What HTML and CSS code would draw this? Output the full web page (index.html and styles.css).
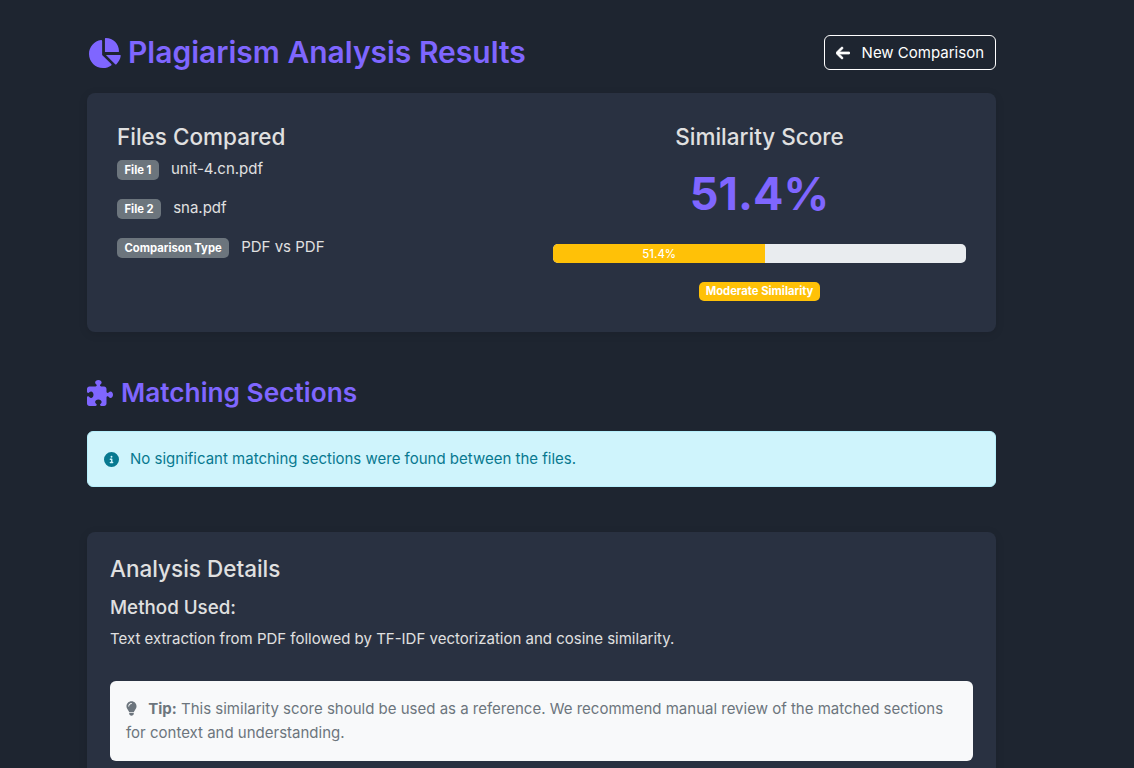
FILE: index.html
```html
<!DOCTYPE html>
<html lang="en">
<head>
    <meta charset="UTF-8">
    <meta name="viewport" content="width=device-width, initial-scale=1.0">
    <title>Plagiarism Analysis Results</title>
    <link rel="stylesheet" href="styles.css">
</head>
<body>
    <div class="container">
        <header class="page-header">
            <h1 class="page-title">
                <svg class="title-icon" viewBox="0 0 576 512"><path d="M304 240V16.6c0-9 7-16.6 16-16.6C443.7 0 544 100.3 544 224c0 9-7.6 16-16.6 16H304zM32 272C32 150.7 122.1 50.3 239 34.3c9.2-1.3 17 6.1 17 15.4V288L412.5 444.5c6.7 6.7 6.2 17.7-1.5 23.1C371.8 495.6 323.8 512 272 512C139.5 512 32 404.6 32 272zm526.4 16c9.3 0 16.6 7.8 15.4 17c-7.7 55.9-34.6 105.6-73.9 142.3c-6 5.6-15.4 5.2-21.2-.7L320 288H558.4z"/></svg>
                Plagiarism Analysis Results
            </h1>
            <a class="back-btn" href="#">
                <svg class="back-icon" viewBox="0 0 448 512"><path d="M9.4 233.4c-12.5 12.5-12.5 32.8 0 45.3l160 160c12.5 12.5 32.8 12.5 45.3 0s12.5-32.8 0-45.3L109.2 288 416 288c17.7 0 32-14.3 32-32s-14.3-32-32-32l-306.7 0L214.6 118.6c12.5-12.5 12.5-32.8 0-45.3s-32.8-12.5-45.3 0l-160 160z"/></svg>
                New Comparison
            </a>
        </header>

        <section class="card summary">
            <div class="files">
                <h3 class="card-heading">Files Compared</h3>
                <div class="file-row"><span class="badge">File 1</span><span>unit-4.cn.pdf</span></div>
                <div class="file-row"><span class="badge">File 2</span><span>sna.pdf</span></div>
                <div class="file-row"><span class="badge">Comparison Type</span><span>PDF vs PDF</span></div>
            </div>
            <div class="score">
                <h3 class="card-heading">Similarity Score</h3>
                <div class="score-value">51.4%</div>
                <div class="progress"><div class="progress-bar" style="width: 51.4%">51.4%</div></div>
                <span class="badge badge-warning">Moderate Similarity</span>
            </div>
        </section>

        <h2 class="section-title">
            <svg class="section-icon" viewBox="0 0 512 512"><path d="M192 104.8c0-9.2-5.8-17.3-13.2-22.8C167.2 73.3 160 61.3 160 48c0-26.5 28.7-48 64-48s64 21.5 64 48c0 13.3-7.2 25.3-18.8 34c-7.4 5.5-13.2 13.6-13.2 22.8v0c0 12.8 10.4 23.2 23.2 23.2H336c26.5 0 48 21.5 48 48v56.8c0 12.8 10.4 23.2 23.2 23.2v0c9.2 0 17.3-5.8 22.8-13.2c8.7-11.6 20.7-18.8 34-18.8c26.5 0 48 28.7 48 64s-21.5 64-48 64c-13.3 0-25.3-7.2-34-18.8c-5.5-7.4-13.6-13.2-22.8-13.2v0c-12.8 0-23.2 10.4-23.2 23.2V464c0 26.5-21.5 48-48 48H279.2c-12.8 0-23.2-10.4-23.2-23.2v0c0-9.2 5.8-17.3 13.2-22.8c11.6-8.7 18.8-20.7 18.8-34c0-26.5-28.7-48-64-48s-64 21.5-64 48c0 13.3 7.2 25.3 18.8 34c7.4 5.5 13.2 13.6 13.2 22.8v0c0 12.8-10.4 23.2-23.2 23.2H48c-26.5 0-48-21.5-48-48V343.2C0 330.4 10.4 320 23.2 320v0c9.2 0 17.3 5.8 22.8 13.2C54.7 344.8 66.7 352 80 352c26.5 0 48-28.7 48-64s-21.5-64-48-64c-13.3 0-25.3 7.2-34 18.8C40.5 250.2 32.4 256 23.2 256v0C10.4 256 0 245.6 0 232.8V176c0-26.5 21.5-48 48-48H168.8c12.8 0 23.2-10.4 23.2-23.2v0z"/></svg>
            Matching Sections
        </h2>

        <div class="alert">
            <svg class="alert-icon" viewBox="0 0 512 512"><path d="M256 512A256 256 0 1 0 256 0a256 256 0 1 0 0 512zM216 336h24V272H216c-13.3 0-24-10.7-24-24s10.7-24 24-24h48c13.3 0 24 10.7 24 24v88h8c13.3 0 24 10.7 24 24s-10.7 24-24 24H216c-13.3 0-24-10.7-24-24s10.7-24 24-24zm40-208a32 32 0 1 1 0 64 32 32 0 1 1 0-64z"/></svg>
            No significant matching sections were found between the files.
        </div>

        <section class="card details">
            <h3 class="card-heading">Analysis Details</h3>
            <h4 class="method-title">Method Used:</h4>
            <p class="method-text">Text extraction from PDF followed by TF-IDF vectorization and cosine similarity.</p>
            <div class="tip">
                <svg class="tip-icon" viewBox="0 0 384 512"><path d="M272 384c9.6-31.9 29.5-59.1 49.2-86.2l0 0c5.2-7.1 10.4-14.2 15.4-21.4c19.8-28.5 31.4-63 31.4-100.3C368 78.8 289.2 0 192 0S16 78.8 16 176c0 37.3 11.6 71.9 31.4 100.3c5 7.2 10.2 14.3 15.4 21.4l0 0c19.8 27.1 39.7 54.4 49.2 86.2H272zM192 512c44.2 0 80-35.8 80-80V416H112v16c0 44.2 35.8 80 80 80zM112 176c0 8.8-7.2 16-16 16s-16-7.2-16-16c0-61.9 50.1-112 112-112c8.8 0 16 7.2 16 16s-7.2 16-16 16c-44.2 0-80 35.8-80 80z"/></svg>
                <strong>Tip:</strong> This similarity score should be used as a reference. We recommend manual review of the matched sections for context and understanding.
            </div>
        </section>
    </div>
</body>
</html>
```

FILE: styles.css
```css
html, body {
    height: 100%;
    overflow: hidden;
}
body {
    margin: 0;
    background-color: #1e2530;
    color: #e0e0e0;
    font-family: Inter, "Liberation Sans", sans-serif;
    font-size: 15px;
    line-height: 24px;
}
.container {
    width: 909px;
    margin-left: 87px;
}
.page-header {
    display: flex;
    justify-content: space-between;
    align-items: center;
    padding-top: 35px;
    margin-bottom: 23px;
}
.page-title {
    display: flex;
    align-items: center;
    gap: 7px;
    margin: 0;
    font-size: 30px;
    font-weight: 600;
    line-height: 35px;
    color: #7f66ff;
}
.title-icon {
    width: 34px;
    height: 30px;
    fill: #7f66ff;
}
.back-btn {
    display: flex;
    align-items: center;
    gap: 12px;
    height: 33px;
    padding: 0 11px;
    border: 1px solid #fff;
    border-radius: 6px;
    color: #fff;
    text-decoration: none;
    font-size: 15px;
}
.back-icon {
    width: 14px;
    height: 16px;
    fill: #fff;
    stroke: #fff;
    stroke-width: 24;
}
.card {
    background-color: #293141;
    border-radius: 8px;
    box-shadow: 0 2px 10px rgba(0, 0, 0, 0.1);
}
.summary {
    display: grid;
    grid-template-columns: 1fr 413px;
    gap: 23px;
    height: 239px;
    box-sizing: border-box;
    padding: 30px 30px 0;
}
.card-heading {
    margin: 0;
    font-size: 22.5px;
    font-weight: 500;
    line-height: 28px;
    color: #e0e0e0;
}
.files .card-heading {
    margin-bottom: 6px;
}
.file-row {
    display: flex;
    align-items: flex-start;
    gap: 12px;
    height: 39px;
    line-height: 24px;
}
.badge {
    display: inline-block;
    margin-top: 3px;
    padding: 0 7.5px;
    border-radius: 5px;
    background-color: #6c757d;
    color: #fff;
    font-size: 11.25px;
    font-weight: 700;
    line-height: 20px;
}
.score {
    text-align: center;
}
.score-value {
    margin-top: 14px;
    font-size: 45px;
    font-weight: 700;
    line-height: 58px;
    color: #7f66ff;
}
.progress {
    height: 19px;
    margin-top: 21px;
    border-radius: 5px;
    background-color: #e9ecef;
    overflow: hidden;
}
.progress-bar {
    height: 100%;
    background-color: #ffc107;
    color: #fff;
    font-size: 11.25px;
    font-weight: 500;
    line-height: 20px;
    text-align: center;
}
.badge-warning {
    margin-top: 19px;
    padding: 0 7px;
    background-color: #ffc107;
    line-height: 19px;
}
.section-title {
    display: flex;
    align-items: center;
    gap: 8px;
    margin: 44px 0 21px;
    font-size: 26.25px;
    font-weight: 600;
    line-height: 34px;
    color: #7f66ff;
}
.section-icon {
    width: 26px;
    height: 26px;
    fill: #7f66ff;
}
.alert {
    display: flex;
    align-items: center;
    gap: 11px;
    box-sizing: border-box;
    height: 56px;
    padding: 0 16px;
    border: 1px solid #b6effb;
    border-radius: 6px;
    background-color: #cff4fc;
    color: #087990;
}
.alert-icon {
    width: 15px;
    height: 15px;
    fill: #087990;
}
.details {
    margin-top: 45px;
    padding: 23px 23px 24px;
}
.method-title {
    margin: 13px 0 7px;
    font-size: 18.75px;
    font-weight: 500;
    line-height: 24px;
}
.method-text {
    margin: 0 0 30px;
}
.tip {
    padding: 16px;
    border-radius: 6px;
    background-color: #f8f9fa;
    color: #6c757d;
}
.tip-icon {
    width: 11px;
    height: 15px;
    margin-right: 7px;
    vertical-align: -2px;
    fill: #6c757d;
}
```
